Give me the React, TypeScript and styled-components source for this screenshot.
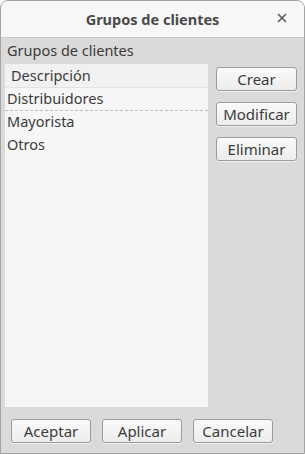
import styled, { createGlobalStyle } from "styled-components";

const Global = createGlobalStyle`
    html, body {
        margin: 0;
        padding: 0;
        background: #ffffff;
    }
    body {
        font-family: "Noto Sans", "DejaVu Sans", sans-serif;
    }
`;

const Window = styled.div`
    width: 305px;
    height: 454px;
    box-sizing: border-box;
    display: flex;
    flex-direction: column;
    border: 1px solid #a3a3a3;
    border-radius: 8px 8px 0 0;
    background: #dadada;
    overflow: hidden;
`;

const TitleBar = styled.div`
    height: 36px;
    flex: none;
    display: flex;
    align-items: center;
    justify-content: center;
    position: relative;
    background: #f7f7f7;
    border-bottom: 1px solid #c9c9c9;
    color: #4a4a4a;
    font-size: 14.5px;
    font-weight: 700;
`;

const Close = styled.span`
    position: absolute;
    right: 14px;
    top: 9px;
    width: 16px;
    height: 16px;
    display: flex;
    align-items: center;
    justify-content: center;
`;

const Body = styled.div`
    flex: 1;
    display: flex;
    flex-direction: column;
    padding: 2px 6px 10px 4px;
`;

const Label = styled.div`
    color: #3c3c3c;
    font-size: 14.5px;
    line-height: 20px;
    padding-left: 2px;
    margin-bottom: 4px;
`;

const Main = styled.div`
    flex: 1;
    display: grid;
    grid-template-columns: 203px 81px;
    column-gap: 8px;
`;

const List = styled.div`
    background: #f6f6f6;
    height: 343px;
    display: flex;
    flex-direction: column;
`;

const Header = styled.div`
    height: 23px;
    line-height: 22px;
    padding-left: 6px;
    color: #3c3c3c;
    font-size: 14.5px;
    background: #f1f1f1;
    border-bottom: 1px solid #e2e2e2;
`;

const Row = styled.div<{ $dashed?: boolean }>`
    height: 22px;
    line-height: 21px;
    padding-left: 2px;
    color: #3c3c3c;
    font-size: 14.5px;
    border-bottom: 1px ${(p) => (p.$dashed ? "dashed #bdbdbd" : "solid transparent")};
`;

const Side = styled.div`
    display: flex;
    flex-direction: column;
    gap: 11px;
    padding-top: 3px;
`;

const Button = styled.button<{ $w?: number }>`
    width: ${(p) => p.$w ?? 81}px;
    height: 24px;
    padding: 0;
    box-sizing: border-box;
    border: 1px solid #9c9c9c;
    border-radius: 3px;
    background: linear-gradient(#fafafa, #ececec);
    box-shadow: 0 1px 0 rgba(255, 255, 255, 0.6);
    color: #3c3c3c;
    font-family: inherit;
    font-size: 15px;
    line-height: 22px;
`;

const Footer = styled.div`
    display: flex;
    gap: 11px;
    padding: 11px 0 0 6px;
`;

const XIcon = () => (
    <svg width="10" height="10" viewBox="0 0 10 10">
        <path d="M1 1 L9 9 M9 1 L1 9" stroke="#555" strokeWidth="1.5" />
    </svg>
);

export default function App() {
    return (
        <>
            <Global />
            <Window>
                <TitleBar>
                    Grupos de clientes
                    <Close>
                        <XIcon />
                    </Close>
                </TitleBar>
                <Body>
                    <Label>Grupos de clientes</Label>
                    <Main>
                        <List>
                            <Header>Descripción</Header>
                            <Row $dashed>Distribuidores</Row>
                            <Row>Mayorista</Row>
                            <Row>Otros</Row>
                        </List>
                        <Side>
                            <Button>Crear</Button>
                            <Button>Modificar</Button>
                            <Button>Eliminar</Button>
                        </Side>
                    </Main>
                    <Footer>
                        <Button $w={80}>Aceptar</Button>
                        <Button $w={80}>Aplicar</Button>
                        <Button $w={80}>Cancelar</Button>
                    </Footer>
                </Body>
            </Window>
        </>
    );
}
